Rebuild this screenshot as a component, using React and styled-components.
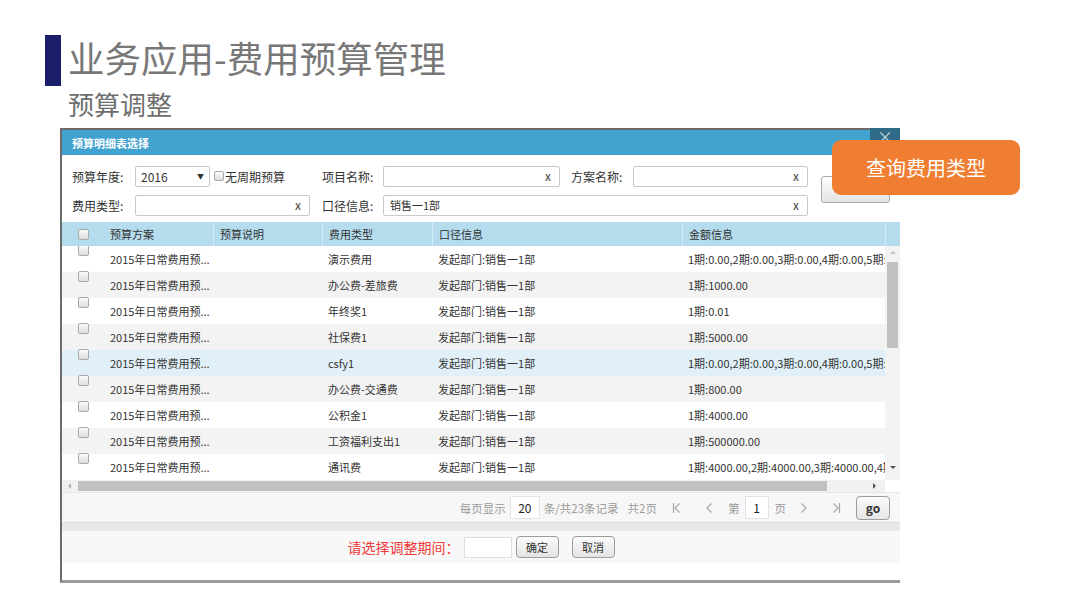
import React from 'react';
import styled, { createGlobalStyle } from 'styled-components';

const GlobalStyle = createGlobalStyle`
  html, body {
    margin: 0;
    padding: 0;
    background: #ffffff;
  }
  body {
    font-family: "Noto Sans CJK SC", "Noto Sans", sans-serif;
  }
  * {
    box-sizing: border-box;
  }
`;

const Slide = styled.div`
  position: relative;
  width: 1080px;
  height: 608px;
  overflow: hidden;
  background: #ffffff;
  padding: 35px 0 0 45px;
`;

const TitleRow = styled.div`
  display: flex;
  align-items: center;
  height: 51px;
`;

const TitleBar = styled.div`
  width: 16px;
  height: 51px;
  background: #1b1e6b;
`;

const Title = styled.h1`
  margin: 0 0 5px 7px;
  font-size: 36.5px;
  font-weight: 400;
  line-height: 1;
  color: #787878;
`;

const Subtitle = styled.h2`
  margin: 3px 0 0 23px;
  height: 30px;
  font-size: 26px;
  font-weight: 400;
  line-height: 30px;
  color: #6e6e6e;
`;

const Dialog = styled.div`
  display: flex;
  flex-direction: column;
  width: 840px;
  height: 455px;
  margin: 9px 0 0 15px;
  background: #ffffff;
  border-top: 2px solid #6c6c6c;
  border-left: 2px solid #6c6c6c;
  border-bottom: 3px solid #9a9a9a;
`;

const DialogHeader = styled.div`
  display: flex;
  align-items: center;
  justify-content: space-between;
  height: 25px;
  padding-left: 10px;
  background: #43a3d0;
`;

const HeaderTitle = styled.span`
  font-size: 11px;
  font-weight: 700;
  color: #ffffff;
`;

const CloseButton = styled.div`
  align-self: flex-start;
  width: 30px;
  height: 20px;
  margin-top: -2px;
  background: #2f6a87;
  color: #c9d6dd;
  font-size: 16px;
  line-height: 16px;
  text-align: center;
`;

const Form = styled.div`
  display: flex;
  height: 67px;
  padding: 8px 0 4px 10px;
`;

const FieldRows = styled.div`
  display: flex;
  flex-direction: column;
  gap: 3px;
`;

const FieldRow = styled.div`
  display: flex;
  align-items: center;
  height: 26px;
`;

const Label = styled.span`
  width: ${(p) => p.$w}px;
  margin-left: ${(p) => p.$ml || 0}px;
  font-size: 12px;
  color: #333333;
  white-space: nowrap;
`;

const TextInput = styled.div`
  display: flex;
  align-items: center;
  justify-content: space-between;
  width: ${(p) => p.$w}px;
  height: 21px;
  padding: 0 8px 0 6px;
  border: 1px solid #c9c9c9;
  border-radius: 2px;
  background: #ffffff;
  font-size: 11px;
  color: #333333;
`;

const ClearMark = styled.span`
  font-size: 12px;
  color: #444444;
  line-height: 1;
`;

const Select = styled(TextInput)`
  padding: 0 5px 0 5px;
  font-size: 12px;
`;

const Caret = styled.span`
  font-size: 7px;
  color: #333333;
`;

const CheckWrap = styled.label`
  display: flex;
  align-items: center;
  gap: 1px;
  width: 73px;
  margin-left: 4px;
  font-size: 12px;
  color: #333333;
  white-space: nowrap;
`;

const Box = styled.span`
  display: inline-block;
  flex: none;
  width: ${(p) => p.$size || 11}px;
  height: ${(p) => p.$size || 11}px;
  border: 1px solid #a9a9a9;
  border-radius: 2px;
  background: linear-gradient(#fbfbfb, #dedede);
`;

const QueryButton = styled.div`
  width: 69px;
  height: 27px;
  margin: 13px 0 0 13px;
  border: 1px solid #aaaaaa;
  border-radius: 3px;
  background: linear-gradient(#ffffff, #e4e4e4);
`;

const cols = '42px 109px 109px 110px 250px 203px';

const HeadRow = styled.div`
  display: grid;
  grid-template-columns: ${cols} 15px;
  height: 24px;
  background: #b4dcec;
`;

const HeadCell = styled.div`
  display: flex;
  align-items: center;
  padding-left: 6px;
  border-left: ${(p) => (p.$first ? 'none' : '1px solid #d3ecf6')};
  font-size: 11px;
  color: #333333;
  white-space: nowrap;
`;

const CheckCell = styled.div`
  display: flex;
  justify-content: center;
  align-items: ${(p) => (p.$top ? 'flex-start' : 'center')};
  margin-top: ${(p) => (p.$top ? -1 : 0)}px;
`;

const TableBody = styled.div`
  display: flex;
  height: 234px;
`;

const Rows = styled.div`
  width: 823px;
  overflow: hidden;
`;

const Row = styled.div`
  display: grid;
  grid-template-columns: ${cols};
  height: 26px;
  background: ${(p) => (p.$active ? '#e1f0f8' : p.$alt ? '#f3f3f3' : '#ffffff')};
`;

const Cell = styled.div`
  padding-left: 6px;
  line-height: 26px;
  font-size: 11px;
  color: #333333;
  white-space: nowrap;
  overflow: hidden;
`;

const VScroll = styled.div`
  display: flex;
  flex-direction: column;
  align-items: center;
  width: 15px;
  background: #f3f3f3;
`;

const ArrowUp = styled.span`
  margin-top: 5px;
  border-left: 3px solid transparent;
  border-right: 3px solid transparent;
  border-bottom: 3px solid ${(p) => p.$c};
`;

const ArrowDown = styled.span`
  margin: auto 0 11px;
  border-left: 3px solid transparent;
  border-right: 3px solid transparent;
  border-top: 3px solid ${(p) => p.$c};
`;

const VThumb = styled.div`
  width: 11px;
  height: 86px;
  margin-top: 8px;
  background: #c1c1c1;
`;

const HScroll = styled.div`
  display: flex;
  height: 12px;
`;

const HTrack = styled.div`
  display: flex;
  align-items: center;
  width: 823px;
  padding: 0 6px;
  background: #f1f1f1;
`;

const ArrowLeft = styled.span`
  border-top: 3px solid transparent;
  border-bottom: 3px solid transparent;
  border-right: 3px solid ${(p) => p.$c};
`;

const ArrowRight = styled.span`
  margin-left: auto;
  margin-right: 3px;
  border-top: 3px solid transparent;
  border-bottom: 3px solid transparent;
  border-left: 3px solid ${(p) => p.$c};
`;

const HThumb = styled.div`
  width: 749px;
  height: 10px;
  margin-left: 7px;
  background: #c1c1c1;
`;

const Corner = styled.div`
  width: 15px;
  background: #ffffff;
`;

const Pager = styled.div`
  display: flex;
  align-items: center;
  justify-content: flex-end;
  height: 30px;
  padding-right: 10px;
  background: #f7f7f7;
  border-top: 1px solid #e6e6e6;
  font-size: 11.5px;
  color: #9a9a9a;
  white-space: nowrap;
`;

const PagerText = styled.span`
  margin-left: ${(p) => p.$ml || 0}px;
`;

const PageInput = styled.span`
  display: flex;
  align-items: center;
  justify-content: center;
  width: ${(p) => p.$w}px;
  height: 23px;
  margin-left: ${(p) => p.$ml}px;
  background: #ffffff;
  border: 1px solid #e3e3e3;
  font-size: 12px;
  color: #222222;
`;

const PagerIcon = styled.svg`
  margin-left: ${(p) => p.$ml}px;
  flex: none;
`;

const GoButton = styled.span`
  display: flex;
  align-items: center;
  justify-content: center;
  width: 34px;
  height: 24px;
  margin-left: 15px;
  border: 1px solid #9d9d9d;
  border-radius: 4px;
  background: linear-gradient(#fbfbfb, #e6e6e6);
  font-size: 12px;
  font-weight: 700;
  color: #333333;
`;

const Band = styled.div`
  height: 9px;
  background: #e8e8e8;
  border-top: 1px solid #dddddd;
`;

const Toolbar = styled.div`
  display: flex;
  align-items: center;
  justify-content: center;
  height: 32px;
  background: #f8f8f8;
`;

const PeriodLabel = styled.span`
  font-size: 14px;
  color: #f03a3a;
`;

const PeriodInput = styled.span`
  width: 48px;
  height: 21px;
  margin-left: 4px;
  background: #ffffff;
  border: 1px solid #dddddd;
`;

const SmallButton = styled.span`
  display: flex;
  align-items: center;
  justify-content: center;
  width: 43px;
  height: 22px;
  margin-left: ${(p) => p.$ml}px;
  border: 1px solid #9d9d9d;
  border-radius: 4px;
  background: linear-gradient(#fbfbfb, #e4e4e4);
  font-size: 11px;
  color: #333333;
`;

const Filler = styled.div`
  flex: 1;
  background: #ffffff;
`;

const Callout = styled.div`
  position: absolute;
  left: 832px;
  top: 140px;
  display: flex;
  align-items: center;
  justify-content: center;
  width: 188px;
  height: 55px;
  border-radius: 9px;
  background: #ef7e32;
  font-size: 20px;
  color: #ffffff;
`;

const rows = [
  { type: '演示费用', amount: '1期:0.00,2期:0.00,3期:0.00,4期:0.00,5期:0.00' },
  { type: '办公费-差旅费', amount: '1期:1000.00' },
  { type: '年终奖1', amount: '1期:0.01' },
  { type: '社保费1', amount: '1期:5000.00' },
  { type: 'csfy1', amount: '1期:0.00,2期:0.00,3期:0.00,4期:0.00,5期:0.00', active: true },
  { type: '办公费-交通费', amount: '1期:800.00' },
  { type: '公积金1', amount: '1期:4000.00' },
  { type: '工资福利支出1', amount: '1期:500000.00' },
  { type: '通讯费', amount: '1期:4000.00,2期:4000.00,3期:4000.00,4期:4000.00' },
];

const Chevron = ({ dir, bar, ml }) => (
  <PagerIcon $ml={ml} width="10" height="12" viewBox="0 0 10 12">
    <g fill="none" stroke="#a8a8a8" strokeWidth="1.2">
      {dir === 'left' ? <path d="M7.5 1.5 L3 6 L7.5 10.5" /> : <path d="M2.5 1.5 L7 6 L2.5 10.5" />}
      {bar && (dir === 'left' ? <path d="M1.5 1 V11" /> : <path d="M8.5 1 V11" />)}
    </g>
  </PagerIcon>
);

const App = () => (
  <>
    <GlobalStyle />
    <Slide>
      <TitleRow>
        <TitleBar />
        <Title>业务应用-费用预算管理</Title>
      </TitleRow>
      <Subtitle>预算调整</Subtitle>

      <Dialog>
        <DialogHeader>
          <HeaderTitle>预算明细表选择</HeaderTitle>
          <CloseButton>×</CloseButton>
        </DialogHeader>

        <Form>
          <FieldRows>
            <FieldRow>
              <Label $w={63}>预算年度:</Label>
              <Select $w={75}>
                2016 <Caret>▼</Caret>
              </Select>
              <CheckWrap>
                <Box $size={10} />
                无周期预算
              </CheckWrap>
              <Label $w={61} $ml={35}>项目名称:</Label>
              <TextInput $w={177}>
                <span />
                <ClearMark>x</ClearMark>
              </TextInput>
              <Label $w={62} $ml={11}>方案名称:</Label>
              <TextInput $w={175}>
                <span />
                <ClearMark>x</ClearMark>
              </TextInput>
            </FieldRow>
            <FieldRow>
              <Label $w={63}>费用类型:</Label>
              <TextInput $w={175}>
                <span />
                <ClearMark>x</ClearMark>
              </TextInput>
              <Label $w={61} $ml={12}>口径信息:</Label>
              <TextInput $w={425}>
                <span>销售一1部</span>
                <ClearMark>x</ClearMark>
              </TextInput>
            </FieldRow>
          </FieldRows>
          <QueryButton />
        </Form>

        <HeadRow>
          <CheckCell>
            <Box />
          </CheckCell>
          <HeadCell $first>预算方案</HeadCell>
          <HeadCell>预算说明</HeadCell>
          <HeadCell>费用类型</HeadCell>
          <HeadCell>口径信息</HeadCell>
          <HeadCell>金额信息</HeadCell>
          <HeadCell />
        </HeadRow>

        <TableBody>
          <Rows>
            {rows.map((r, i) => (
              <Row key={i} $alt={i % 2 === 1} $active={r.active}>
                <CheckCell $top>
                  <Box />
                </CheckCell>
                <Cell>2015年日常费用预...</Cell>
                <Cell />
                <Cell>{r.type}</Cell>
                <Cell>发起部门:销售一1部</Cell>
                <Cell>{r.amount}</Cell>
              </Row>
            ))}
          </Rows>
          <VScroll>
            <ArrowUp $c="#c4c4c4" />
            <VThumb />
            <ArrowDown $c="#555555" />
          </VScroll>
        </TableBody>

        <HScroll>
          <HTrack>
            <ArrowLeft $c="#b0b0b0" />
            <HThumb />
            <ArrowRight $c="#555555" />
          </HTrack>
          <Corner />
        </HScroll>

        <Pager>
          <PagerText>每页显示</PagerText>
          <PageInput $w={30} $ml={4}>20</PageInput>
          <PagerText $ml={4}>条/共23条记录</PagerText>
          <PagerText $ml={9}>共2页</PagerText>
          <Chevron dir="left" bar ml={15} />
          <Chevron dir="left" ml={22} />
          <PagerText $ml={14}>第</PagerText>
          <PageInput $w={24} $ml={5}>1</PageInput>
          <PagerText $ml={6}>页</PagerText>
          <Chevron dir="right" ml={13} />
          <Chevron dir="right" bar ml={22} />
          <GoButton>go</GoButton>
        </Pager>

        <Band />

        <Toolbar>
          <PeriodLabel>请选择调整期间：</PeriodLabel>
          <PeriodInput />
          <SmallButton $ml={4}>确定</SmallButton>
          <SmallButton $ml={13}>取消</SmallButton>
        </Toolbar>

        <Filler />
      </Dialog>

      <Callout>查询费用类型</Callout>
    </Slide>
  </>
);

export default App;
